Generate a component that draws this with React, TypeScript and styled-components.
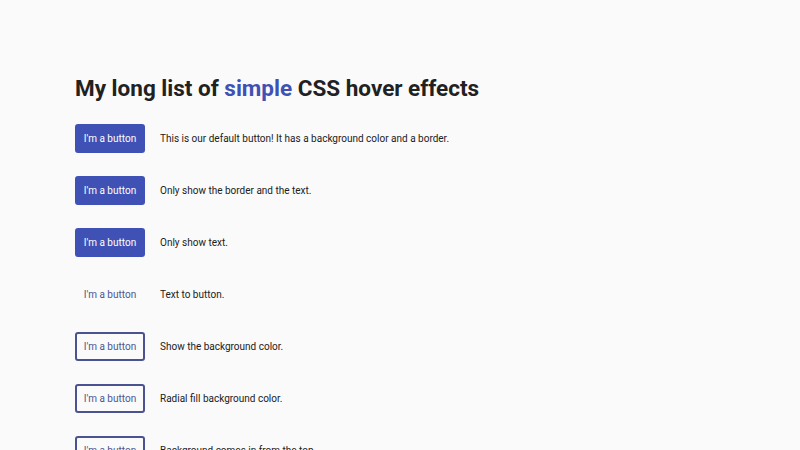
import React from 'react';
import styled, { createGlobalStyle } from 'styled-components';

const GlobalStyle = createGlobalStyle`
  html, body {
    margin: 0;
    background: #fafafa;
    font-family: Roboto, "Liberation Sans", sans-serif;
    color: #212121;
    overflow: hidden;
  }
`;

const Page = styled.main`
  padding: 70px 75px 0;
`;

const Title = styled.h1`
  margin: 0 0 18px;
  font-size: 22.5px;
  font-weight: 700;
  line-height: 36px;
  color: #212121;
`;

const Accent = styled.span`
  color: #3f51b5;
`;

const List = styled.ul`
  list-style: none;
  margin: 0;
  padding: 0;
  display: flex;
  flex-direction: column;
  gap: 23px;
`;

const Row = styled.li`
  display: flex;
  align-items: center;
  gap: 15px;
`;

type Variant = 'filled' | 'plain' | 'outline';

const Button = styled.button<{ $variant: Variant }>`
  box-sizing: border-box;
  width: 70px;
  height: 29px;
  padding: 0;
  border-radius: 3px;
  font-family: Roboto, "Liberation Sans", sans-serif;
  font-size: 10px;
  cursor: pointer;
  border: 2px solid
    ${p => (p.$variant === 'filled' ? '#3f51b5' : p.$variant === 'outline' ? '#4b5291' : 'transparent')};
  background: ${p => (p.$variant === 'filled' ? '#3f51b5' : 'transparent')};
  color: ${p => (p.$variant === 'filled' ? '#ffffff' : '#4d5590')};
`;

const Desc = styled.span`
  font-size: 10px;
  color: #212121;
`;

const effects: { variant: Variant; text: string }[] = [
  { variant: 'filled', text: 'This is our default button! It has a background color and a border.' },
  { variant: 'filled', text: 'Only show the border and the text.' },
  { variant: 'filled', text: 'Only show text.' },
  { variant: 'plain', text: 'Text to button.' },
  { variant: 'outline', text: 'Show the background color.' },
  { variant: 'outline', text: 'Radial fill background color.' },
  { variant: 'outline', text: 'Background comes in from the top.' },
];

export default function App() {
  return (
    <>
      <GlobalStyle />
      <Page>
        <Title>
          My long list of <Accent>simple</Accent> CSS hover effects
        </Title>
        <List>
          {effects.map((e, i) => (
            <Row key={i}>
              <Button $variant={e.variant}>I'm a button</Button>
              <Desc>{e.text}</Desc>
            </Row>
          ))}
        </List>
      </Page>
    </>
  );
}
